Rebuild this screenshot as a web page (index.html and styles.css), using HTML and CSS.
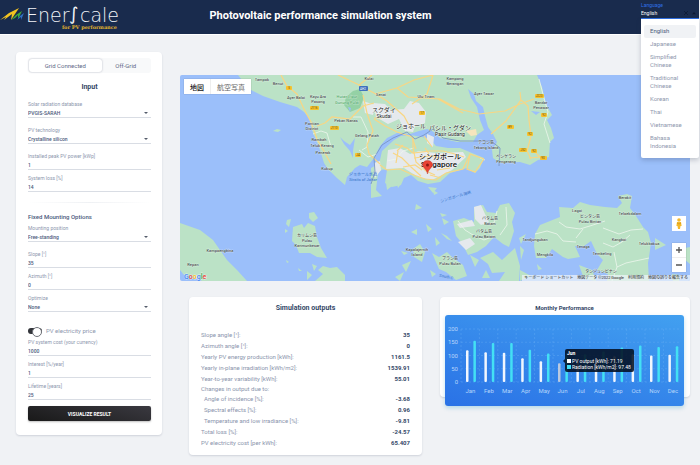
FILE: index.html
```
<!DOCTYPE html>
<html lang="en">
<head>
<meta charset="utf-8">
<title>EnerScale</title>
<meta name="viewport" content="width=device-width, initial-scale=1">
<link rel="stylesheet" href="styles.css">
</head>
<body>
<header class="topbar">
  <svg class="logo" viewBox="0 0 120 34" role="img" aria-label="EnerScale for PV performance">
    <path d="M0 20 9 13 19 8 15 14 11 20 12 14 8 17 4 20 6 17Z" fill="#f3c320"/>
    <path d="M11 20 16 15 22 11 18 19 18 15 15 18Z" fill="#3fae3a"/>
    <path d="M17 20 20 16 24 13 21 20 21 17Z" fill="#2f6fc4"/>
    <text class="logo-name" x="26" y="22">Ener</text>
    <text class="logo-s" x="69" y="20">∫</text>
    <text class="logo-name" x="80" y="22">cale</text>
    <text class="logo-tag" x="117" y="29" text-anchor="end">for PV performance</text>
  </svg>
  <h1 class="title">Photovoltaic performance simulation system</h1>
  <div class="language">
    <label for="language">Language</label>
    <div class="language-box">
      <input id="language" role="combobox" aria-expanded="true" aria-controls="language-list" value="English">
      <button type="button" aria-label="Clear"><svg viewBox="0 0 6 6"><path d="M1 1 5 5M5 1 1 5" stroke="#0d1a33" stroke-width=".8"/></svg></button>
      <button type="button" aria-label="Close"><svg viewBox="0 0 6 6"><path d="M1 4.200 3 2 5 4.200Z" fill="#0d1a33"/></svg></button>
    </div>
    <ul class="menu" id="language-list" role="listbox">
      <li class="option selected" role="option" aria-selected="true">English</li>
      <li class="option" role="option">Japanese</li>
      <li class="option" role="option">Simplified Chinese</li>
      <li class="option" role="option">Traditional Chinese</li>
      <li class="option" role="option">Korean</li>
      <li class="option" role="option">Thai</li>
      <li class="option" role="option">Vietnamese</li>
      <li class="option" role="option">Bahasa Indonesia</li>
    </ul>
  </div>
</header>

<main class="layout">
  <form class="card sidebar">
    <div class="tabs">
      <button type="button" class="tab active">Grid Connected</button>
      <button type="button" class="tab">Off-Grid</button>
    </div>
    <h2 class="card-title">Input</h2>
    <div class="fields">
      <div class="field pick"><label for="db">Solar radiation database</label><select id="db"><option>PVGIS-SARAH</option></select></div>
      <div class="field pick"><label for="tech">PV technology</label><select id="tech"><option>Crystalline silicon</option></select></div>
      <div class="field"><label for="peak">Installed peak PV power [kWp]</label><input id="peak" value="1"></div>
      <div class="field"><label for="loss">System loss [%]</label><input id="loss" value="14"></div>
    </div>
    <hr class="divider">
    <h3 class="group-title">Fixed Mounting Options</h3>
    <div class="fields">
      <div class="field pick"><label for="mount">Mounting position</label><select id="mount"><option>Free-standing</option></select></div>
      <div class="field"><label for="slope">Slope [°]</label><input id="slope" value="35"></div>
      <div class="field"><label for="azimuth">Azimuth [°]</label><input id="azimuth" value="0"></div>
      <div class="field pick"><label for="optimize">Optimize</label><select id="optimize"><option>None</option></select></div>
    </div>
    <label class="switch"><input type="checkbox" checked><span>PV electricity price</span></label>
    <div class="fields">
      <div class="field"><label for="cost">PV system cost (your currency)</label><input id="cost" value="1000"></div>
      <div class="field"><label for="interest">Interest [%/year]</label><input id="interest" value="1"></div>
      <div class="field"><label for="life">Lifetime [years]</label><input id="life" value="25"></div>
    </div>
    <button type="button" class="submit">VISUALIZE RESULT</button>
  </form>

  <div class="content">
    <section class="map" aria-label="Map">
      <svg class="map-art" viewBox="180 75 510 206">
        <rect x="180" y="75" width="510" height="206" fill="#9bbffa"/>
        <g fill="#bbe2c6">
          <path d="M238 75 249 89 263 96 280 102 297 107 304 112 309 118 313 133 317 142 320 150 324 163 328 169 337 178 345 185 347 177 355 168 360 165 367 167 374 158 380 146 387 138 397 133 410 134 419 131 427 129 434 132 440 138 457 142 473 142 477 135 484 130 480 120 477 107 471 98 468 89 474 94 476 101 483 107 485 116 488 127 493 134 497 142 492 150 493 158 500 163 520 162 530 165 538 160 549 157 550 142 554 138 551 128 547 120 552 115 547 106 545 100 542 87 537 75Z"/>
          <path d="M394 140 401 136 410 135 422 137 430 139 436 146 448 148 460 148 472 153 484 158 480 168 475 173 467 168 450 173 440 182 428 184 418 181 411 175 404 178 401 185 392 187 385 183 387 170 378 169 382 151Z"/>
          <path d="M371 168 380 163 384 168 378 173 376 190 382 196 371 198ZM386 183 392 186 387 190ZM396 181 401 184 398 188ZM428 187 437 188 433 193ZM433 190 438 193 434 195Z"/>
          <path d="M453 221 464 218 474 222 474 207 483 205 487 212 496 213 500 205 509 203 515 213 512 222 514 231 509 247 503 244 494 237 486 246 477 252 468 255 462 243 456 236Z"/>
          <path d="M432 253 439 257 447 252 453 258 463 265 467 276 456 280 446 272 439 269ZM413 249 420 244 425 252 422 262 414 257ZM442 218 449 222 444 225ZM440 213 447 215 442 217ZM426 224 432 229 428 232ZM441 233 447 236 452 241 447 239ZM435 237 440 243 436 246ZM411 232 417 229 417 235ZM401 251 408 253 404 255ZM402 265 411 261 406 272ZM395 277 404 272 400 281ZM430 270 436 274 432 277ZM470 255 479 260 475 267ZM480 258 493 252 502 260 515 248 520 266 519 281 499 281 505 272 492 273 488 264ZM519 238 526 234 521 244ZM486 270 490 278 482 278ZM416 204 422 208 415 210ZM448 267 457 276 451 275Z"/>
          <path d="M293 227 302 224 304 228 308 223 315 226 317 237 321 248 327 258 317 257 310 253 299 253 296 245 292 241ZM309 213 314 212 318 218 313 222 309 218ZM287 220 291 219 289 227 286 224ZM285 229 288 231 285 233ZM273 131 277 129 281 130 278 132ZM286 260 289 262 287 263ZM298 268 302 271 299 271ZM312 264 317 266 314 271ZM307 271 312 275 307 280ZM318 270 323 266 330 268 337 267 345 275 345 281 315 281 323 274Z"/>
          <path d="M180 223 200 230 213 240 227 260 237 270 247 281 202 281 193 276 184 275 180 270Z"/>
          <path d="M535 234 540 225 550 221 560 217 559 207 573 208 580 202 590 205 605 207 617 208 622 203 618 196 627 194 632 196 630 208 636 216 643 227 648 232 651 243 649 257 648 263 649 281 607 281 608 274 597 270 603 260 597 254 591 241 584 246 575 246 580 257 568 259 563 257 552 249 546 258 536 258 534 246ZM520 246 524 250 521 260ZM520 270 531 276 520 281ZM655 238 666 245 655 250ZM685 248 690 247 690 264 684 259ZM672 274 680 275 679 281 673 281ZM537 264 542 269 538 270ZM579 265 592 270 596 281 584 279Z"/>
        </g>
        <path d="M346 97 353 91 360 89 364 97 360 108 350 112 344 105Z" fill="#94d1a5"/>
        <g fill="#e5e9ed">
          <path d="M373 103 385 104 391 110 404 109 410 101 419 103 426 112 425 123 415 126 413 132 405 131 399 119 388 124 376 117ZM363 101 375 105 373 115 365 113ZM427 134 434 137 433 147 427 143ZM388 150 400 148 410 154 419 151 436 153 463 152 466 157 452 170 432 180 418 177 404 168 386 169ZM474 207 481 205 485 214 489 222 481 225 475 219ZM457 224 472 220 475 226 460 228ZM458 242 470 238 475 244 466 250ZM374 163 380 161 381 170 375 178Z"/>
        </g>
        <path d="M466 131 476 129 477 135 471 136Z" fill="#f6e5bd"/>
        <g fill="none" stroke="#edf6ee" stroke-width=".8">
          <path d="M313 134 321 131 327 133 331 147M353 117 361 117 368 132 367 147 362 150M359 150 368 157 377 154M387 161 396 159 403 151 414 148M480 158 485 160M535 234 547 231 557 234 563 241 576 242M559 222 566 227 580 229 593 225 605 221M576 238 583 229M603 228 619 234 631 230 643 229M603 243 613 247 622 242 630 235M614 252 617 267 612 281M617 267 626 263 649 258M458 221 465 230 473 235 484 240 494 236M483 224 494 223 497 211M500 235 507 225 506 207M539 79 544 98 548 112 544 124 550 143"/>
        </g>
        <g fill="none" stroke="#f8d684" stroke-width="1.200">
          <path d="M281 75 287 86 297 94 304 109 311 122 317 139 325 153 331 164M317 126 325 123 332 117 350 119 363 106 374 103M338 75 357 84 374 93 387 101 404 116 411 129M359 85 372 75M375 94 397 88 414 80 433 75M397 88 408 97 440 99 459 109 479 114 505 111 520 104 534 99M363 95 367 113 373 131 367 145 369 154 380 164M433 75 427 94 412 104M438 99 463 113M491 134 506 121 521 100 528 106 529 120 531 136 527 151 531 159M374 119 385 126 397 132 412 137 416 149M521 101 520 92M374 118 382 118"/>
          <path d="M380 165 387 170 400 169 411 174 425 179 436 180 446 173 463 169 470 154 484 159M393 153 402 158 411 167 421 176M395 144 407 148 413 153 430 151 443 151 455 154 464 157M413 137 413 148 416 162 426 171 435 175M403 167 415 165 422 170M424 136 432 147M470 155 467 169 475 172 484 159M425 148 429 154M398 151 396 163M403 145 397 151"/>
          <path d="M430 175 441 178M437 170 450 168M414 158 430 156 440 158M534 151 540 157 529 158"/>
        </g>
        <path d="M371 184 375 172 374 158 382 145 393 138 407 132 415 139 424 135 433 129 443 138 460 141 479 141 491 141 500 148 499 166" fill="none" stroke="#7895c6" stroke-width=".9"/>
        <g fill="#9bbffa"><path d="M340 137 344 144 350 151 353 158 353 151 355 138 350 145 344 141ZM531 111 540 112 536 115ZM348 107 351 108 350 112Z"/></g>
        <g fill="#f6c22e">
          <rect x="286" y="86" width="6" height="4" rx="1"/><rect x="310" y="106" width="9" height="4" rx="1"/><rect x="330" y="126" width="9" height="4" rx="1"/><rect x="355" y="153" width="6" height="4" rx="1"/><rect x="419" y="111" width="6" height="4" rx="1"/><rect x="507" y="125" width="7" height="4" rx="1"/><rect x="535" y="94" width="9" height="4" rx="1"/><rect x="541" y="113" width="6" height="4" rx="1"/><rect x="527" y="132" width="6" height="4" rx="1"/><rect x="519" y="148" width="8" height="4" rx="1"/><rect x="531" y="149" width="6" height="4" rx="1"/><rect x="540" y="156" width="7" height="4" rx="1"/>
        </g>
        <rect x="359" y="86" width="9" height="5" rx="1" fill="#4070bd"/>
        <g class="road">
          <text x="289" y="89">5</text><text x="314" y="109">J116</text><text x="334" y="129">J110</text><text x="358" y="156">J4</text><text x="422" y="114">17</text><text x="510" y="128">89</text><text x="539" y="97">J223</text><text x="544" y="116">92</text><text x="530" y="135">92</text><text x="523" y="151">J52</text><text x="534" y="152">92</text><text x="543" y="159">90</text><text x="363" y="90" fill="#fff">AH2</text>
        </g>
        <g class="place">
          <text x="262" y="81">Tampok</text><text x="278" y="85">Benut</text><text x="296" y="99">Ayer Baloi</text><text x="318" y="98">Kayu Ara</text><text x="318" y="103">Pasong</text><text x="312" y="125">Pontian</text><text x="312" y="130">District</text><text x="346" y="122">Pekan Nanas</text><text x="319" y="141">Rambah</text><text x="322" y="147">Teluk Kerang</text><text x="323" y="154">Penerok</text><text x="327" y="170">Kukup</text><text x="367" y="137">Gelang Patah</text><text x="369" y="80">Kulai</text><text x="381" y="96">Senai</text><text x="426" y="98">Ulu Tiram</text><text x="455" y="80">Kampong</text><text x="455" y="85">Berangan</text><text x="484" y="95">Ayer Tawar</text><text x="541" y="104">Bandar</text><text x="541" y="109">Penawar</text><text x="486" y="144">テコン島</text><text x="486" y="149">Tekong Island</text><text x="506" y="158">ペンゲラン</text><text x="506" y="163">Pengerang</text>
          <text x="307" y="237">カリムン島</text><text x="307" y="242">Pulau</text><text x="307" y="247">Karimunbesar</text><text x="220" y="252">Kampoengbina</text><text x="193" y="266">Repan</text><text x="490" y="220">バタム島</text><text x="490" y="225">Batam</text><text x="484" y="233">バタム島</text><text x="484" y="238">Pulau Batam</text><text x="417" y="251">Kapalajernih</text><text x="417" y="256">Island</text><text x="450" y="260">ブラン島</text><text x="450" y="265">Pulau Bulan</text><text x="625" y="199">Berakit</text><text x="577" y="212">Lagoi</text><text x="630" y="215">Teloekdalam</text><text x="590" y="218">ビンタン島</text><text x="590" y="223">Pulau Bintan</text><text x="535" y="241">Tandjunguban</text><text x="619" y="241">Kangboi</text><text x="649" y="245">Telukbakua</text><text x="583" y="248">Tenaga</text><text x="545" y="256">Mengkilo</text><text x="602" y="255">Tembeling</text><text x="601" y="273">タンジュンピナン</text>
        </g>
        <g class="place park"><text x="347" y="98">Hutan Lipur</text><text x="347" y="104">Gunung Pulai</text></g>
        <g class="place sea"><text x="363" y="176">ジョホール水道</text><text x="363" y="181">Straits of Johor</text><text transform="translate(456 198) rotate(-17)">シンガポール海峡</text><text transform="translate(446 278) rotate(12)">South C</text></g>
        <g class="town"><text x="384" y="112">スクダイ</text><text class="latin" x="384" y="118">Skudai</text><text x="411" y="128">ジョホール</text><text x="450" y="130">パシル・グダン</text><text class="latin" x="450" y="136">Pasir Gudang</text></g>
        <g class="city"><text x="440" y="159">シンガポール</text><text class="latin" x="439" y="167">Singapore</text></g>
        <path d="M427.500 174C427 169 422.500 168 422.500 164.500a5 4 0 0 1 10 0C432.500 168 428 169 427.500 174Z" fill="#e94335" stroke="#b3261b" stroke-width=".4"/>
        <circle cx="427.500" cy="165" r="1.500" fill="#8d1712"/>
        <text class="google" x="184" y="279"><tspan fill="#4285f4">G</tspan><tspan fill="#ea4335">o</tspan><tspan fill="#fbbc05">o</tspan><tspan fill="#4285f4">g</tspan><tspan fill="#34a853">l</tspan><tspan fill="#ea4335">e</tspan></text>
      </svg>
      <div class="map-types"><button type="button" class="map-type on">地図</button><button type="button" class="map-type">航空写真</button></div>
      <div class="map-tools">
        <button type="button" class="pegman" aria-label="Street View"><svg viewBox="0 0 14 15"><circle cx="7" cy="4" r="1.800" fill="#f4b92b"/><path d="M5 6h4l.6 4H8.500L8 13H6l-.5-3H4.400Z" fill="#f4b92b"/><path d="M5 7 7 8 9 7" fill="none" stroke="#c98a12" stroke-width=".6"/></svg></button>
        <div class="zoom">
          <button type="button" aria-label="Zoom in"><svg viewBox="0 0 14 14"><path d="M4 7h6M7 4v6" stroke="#555" stroke-width="1.300"/></svg></button>
          <button type="button" aria-label="Zoom out"><svg viewBox="0 0 14 14"><path d="M4 7h6" stroke="#555" stroke-width="1.300"/></svg></button>
        </div>
      </div>
      <div class="map-credit"><a href="#">キーボード ショートカット</a><span>地図データ ©2022 Google</span><a href="#">利用規約</a><a href="#">地図の誤りを報告する</a></div>
    </section>

    <div class="results">
      <section class="card outputs">
        <h2 class="card-title">Simulation outputs</h2>
        <table>
          <tr><th scope="row">Slope angle [°]:</th><td>35</td></tr>
          <tr><th scope="row">Azimuth angle [°]:</th><td>0</td></tr>
          <tr><th scope="row">Yearly PV energy production [kWh]:</th><td>1161.5</td></tr>
          <tr><th scope="row">Yearly in-plane irradiation [kWh/m2]:</th><td>1539.91</td></tr>
          <tr><th scope="row">Year-to-year variability [kWh]:</th><td>55.01</td></tr>
          <tr class="lead"><th scope="row">Changes in output due to:</th><td></td></tr>
          <tr class="sub"><th scope="row">Angle of incidence [%]:</th><td>-3.68</td></tr>
          <tr class="sub"><th scope="row">Spectral effects [%]:</th><td>0.96</td></tr>
          <tr class="sub"><th scope="row">Temperature and low irradiance [%]:</th><td>-9.81</td></tr>
          <tr><th scope="row">Total loss [%]:</th><td>-24.57</td></tr>
          <tr><th scope="row">PV electricity cost [per kWh]:</th><td>65.407</td></tr>
        </table>
      </section>
      <section class="card monthly">
        <h2 class="monthly-title">Monthly Performance</h2>
        <div class="chart">
          <svg viewBox="0 0 239 91" id="chart" role="img" aria-label="Monthly PV output and radiation"></svg>
        </div>
      </section>
    </div>
  </div>
</main>
<script src="chart.js"></script>
</body>
</html>
```
FILE: styles.css
```
* { box-sizing: border-box; }
html { background: #f0f2f5; }
body {
  margin: 0;
  padding-right: 1px;
  font-family: Roboto, "Noto Sans CJK JP", sans-serif;
  font-size: 5px;
  color: #344767;
}
h1, h2, h3, ul { margin: 0; padding: 0; }
button, input, select { font: inherit; color: inherit; border: 0; padding: 0; margin: 0; background: none; }
input, select { outline: 0; border-radius: 0; }
svg { display: block; }

.topbar {
  display: grid;
  grid-template-columns: 120px 1fr 58px;
  height: 35px;
  background: #192b4d;
  border-bottom: 1px solid #fff;
}
.logo { width: 120px; height: 34px; }
.logo-name { font-family: "DejaVu Sans", sans-serif; font-weight: 200; font-size: 19px; fill: #f2f4f8; }
.logo-s { font-family: "DejaVu Sans", sans-serif; font-weight: 200; font-size: 18px; font-style: italic; fill: #f2f4f8; }
.logo-tag { font-family: "DejaVu Serif", serif; font-weight: 700; font-size: 5px; fill: #e2b32c; }
.title { padding-right: 120px; line-height: 32px; font-size: 11px; font-weight: 700; text-align: center; white-space: nowrap; color: #fff; }
.language { position: relative; padding-top: 2px; color: #fff; }
.language label { display: block; font-size: 5px; line-height: 6px; color: #2f6fe4; }
.language-box { display: flex; align-items: center; height: 11px; border-bottom: 1px solid #2f6fe4; }
.language-box input { flex: 1; width: 20px; font-size: 5px; height: 9px; }
.language-box button { width: 8px; }
.language-box svg { width: 6px; height: 6px; }
.menu {
  position: absolute;
  top: 19px;
  left: 0;
  right: 0;
  z-index: 2;
  padding: 6px 3px 5px;
  list-style: none;
  background: #fff;
  border-radius: 0 0 2px 2px;
  box-shadow: 0 2px 5px rgba(40, 50, 80, .25);
}
.option { padding: 2px 14px 3px 6px; font-size: 6px; line-height: 8px; color: #8e97ad; border-radius: 2px; }
.option.selected { background: #f0f2f5; color: #4b5878; }

.layout {
  display: grid;
  grid-template-columns: 146fr 510fr;
  gap: 18px;
  align-items: start;
  padding: 17px 9px 10px 16px;
}
.card { background: #fff; border-radius: 4px; box-shadow: 0 1px 2px rgba(40, 50, 80, .16); }
.card-title { font-size: 7px; font-weight: 700; line-height: 10px; text-align: center; }

.sidebar { padding: 6px 11px 14px 12px; }
.tabs { display: flex; background: #f8f9fa; border-radius: 3px; padding: 1px; }
.tab { flex: 2; height: 13px; font-size: 6px; color: #5f6b88; }
.tab.active { flex: 3; background: #fff; border-radius: 3px; box-shadow: 0 0 2px rgba(40, 50, 80, .35); }
.sidebar .card-title { margin: 9px 0 8px; }
.fields { display: flex; flex-direction: column; gap: 4px; }
.field { position: relative; }
.pick:not(:last-child) { margin-bottom: 4px; }
.field label { display: block; font-size: 5px; line-height: 8px; color: #8d97ae; }
.field input, .field select {
  display: block;
  width: 100%;
  height: 10px;
  font-size: 5px;
  font-weight: 500;
  color: #4b5a7c;
  border-bottom: 1px solid #d9dde4;
  appearance: none;
}
.pick::after {
  content: "";
  position: absolute;
  right: 3px;
  bottom: 4px;
  border: 2px solid transparent;
  border-top-color: #555c6b;
  border-bottom: 0;
}
.divider { height: 1px; margin: 10px 0; border: 0; background: linear-gradient(90deg, transparent, #eff1f4, transparent); }
.group-title { font-size: 6px; font-weight: 500; line-height: 7px; margin-bottom: 4px; color: #4b5a7c; }
.switch { display: flex; align-items: center; gap: 4px; margin: 14px 0 3px; font-size: 6px; line-height: 9px; color: #8d97ae; }
.switch input { position: relative; appearance: none; width: 14px; height: 6px; border-radius: 3px; background: #33353a; }
.switch input::after {
  content: "";
  position: absolute;
  top: -1px;
  right: 0;
  width: 8px;
  height: 8px;
  border: 1px solid #6f7279;
  border-radius: 50%;
  background: #fff;
}
.submit {
  display: block;
  width: 100%;
  height: 15px;
  margin-top: 6px;
  font-size: 5px;
  font-weight: 700;
  color: #fff;
  background: linear-gradient(195deg, #3a3940, #191919);
  border-radius: 2px;
  box-shadow: 0 1px 2px rgba(0, 0, 0, .25);
}

.content { padding-top: 23px; }
.map { position: relative; overflow: hidden; border-radius: 2px; }
.map-art { width: 100%; height: auto; }
.map-art text { text-anchor: middle; }
.place { font-size: 4px; font-weight: 500; fill: #46504f; stroke: #fff; stroke-width: .6px; stroke-opacity: .6; paint-order: stroke; }
.park { fill: #4da866; }
.sea { fill: #4a7fd0; stroke: none; }
.road { font-size: 3px; fill: #5c4a10; }
.town { font-size: 6px; fill: #222; stroke: #fff; stroke-width: 1px; stroke-opacity: .6; paint-order: stroke; }
.town .latin { font-size: 5px; }
.city { font-size: 7px; font-weight: 500; fill: #111; stroke: #fff; stroke-width: 1px; stroke-opacity: .6; paint-order: stroke; }
.city .latin { font-size: 8px; }
.map-art .google { font-size: 7px; font-weight: 500; text-anchor: start; stroke: #fff; stroke-width: .8px; stroke-opacity: .6; paint-order: stroke; }
.map-types { position: absolute; top: 4px; left: 4px; display: flex; background: #fff; box-shadow: 0 0 1px rgba(0, 0, 0, .3); }
.map-type { height: 15px; padding: 0 6px; font-size: 7px; color: #666; }
.map-type.on { color: #111; font-weight: 500; border-right: 1px solid #eee; }
.map-tools { position: absolute; right: 4px; bottom: 9px; display: grid; gap: 12px; width: 14px; }
.map-tools button { display: block; width: 14px; background: #fff; }
.zoom { box-shadow: 0 0 1px rgba(0, 0, 0, .3); background: #eee; display: grid; gap: 1px; }
.map-credit {
  position: absolute;
  right: 0;
  bottom: 0;
  display: flex;
  gap: 4px;
  padding: 0 2px;
  font-size: 4px;
  line-height: 6px;
  color: #222;
  background: rgba(240, 245, 250, .7);
}
.map-credit a { color: inherit; text-decoration: none; }

.results { display: grid; grid-template-columns: 233fr 250fr; gap: 18px; align-items: start; padding: 16px 0 0 9px; }
.outputs { padding: 6px 12px 7px; }
.outputs table { width: 100%; margin-top: 16px; border-collapse: collapse; }
.outputs th, .outputs td { height: 11px; padding: 0; line-height: 9px; }
.outputs .lead th, .outputs .lead td { height: 9px; }
.outputs th { text-align: left; font-size: 6px; font-weight: 400; color: #8a94ac; }
.outputs td { text-align: right; font-size: 6px; font-weight: 700; }
.outputs .sub th { padding-left: 3px; }
.monthly { padding: 6px 6px 0 5px; }
.monthly-title { font-size: 6px; font-weight: 700; line-height: 9px; text-align: center; margin-bottom: 3px; }
.chart {
  margin-bottom: -9px;
  border-radius: 3px;
  background: linear-gradient(195deg, #42a0f0, #2a72e6);
  box-shadow: 0 2px 4px rgba(0, 140, 190, .25);
}
.chart svg { width: 100%; height: auto; }
.axis { font-size: 6px; fill: #b5d5fb; }
.grid { stroke: #6db2f5; stroke-opacity: .7; stroke-width: .5px; stroke-dasharray: 2 2; fill: none; }
.tip { font-size: 5px; fill: #fff; }
.tip-head { font-weight: 700; }
```
FILE: chart.js
```
const months = ["Jan", "Feb", "Mar", "Apr", "May", "Jun", "Jul", "Aug", "Sep", "Oct", "Nov", "Dec"];
const output = [120, 112, 110, 90, 78, 71.19, 78, 85, 97, 105, 100, 103];
const radiation = [156, 147, 147, 122, 108, 97.48, 105, 115, 130, 138, 132, 135];
const left = 16, base = 67, step = 18.4, scale = 53 / 200;
let art = "";

for (let v = 0; v <= 200; v += 50) {
  const y = base - v * scale;
  art += `<path class="grid" d="M${left} ${y}H236"/><text class="axis" x="13" y="${y + 2}" text-anchor="end">${v}</text>`;
}
months.forEach((name, i) => {
  const x = left + i * step;
  const bar = (bx, v, fill) => `<rect x="${bx}" y="${base - v * scale}" width="2.5" height="${v * scale}" rx="1" fill="${fill}"/>`;
  art += `<path class="grid" d="M${x} 14V67"/>`;
  art += bar(x + 5, output[i], i === 5 ? "#b9c9e0" : "#f1f6fe") + bar(x + 12.4, radiation[i], "#43e0f4");
  art += `<text class="axis" x="${x + 9.5}" y="78" text-anchor="middle">${name}</text>`;
});
art += `<g class="tip"><path d="M118 46 120 44V36a2 2 0 0 1 2-2h65a2 2 0 0 1 2 2v19a2 2 0 0 1-2 2h-65a2 2 0 0 1-2-2V48Z" fill="#030f22" fill-opacity=".88"/>
<text class="tip-head" x="122" y="40">Jun</text>
<rect x="122" y="44" width="4" height="4" fill="#fff"/><text x="127" y="48">PV output [kWh]: 71.19</text>
<rect x="122" y="50" width="4" height="4" fill="#43e0f4"/><text x="127" y="54">Radiation [kWh/m2]: 97.48</text></g>`;
document.getElementById("chart").innerHTML = art;
```
